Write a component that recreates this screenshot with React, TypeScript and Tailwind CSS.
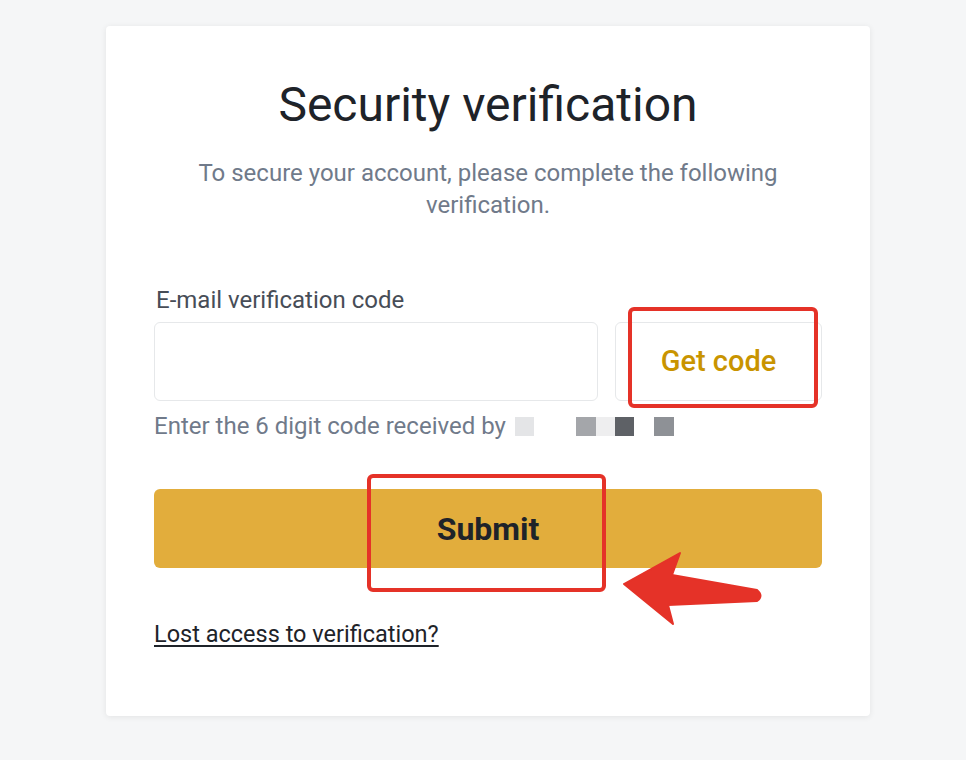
export default function App() {
  return (
    <div className="min-h-screen bg-[#f5f6f7] pt-[26px] font-['Roboto',sans-serif]">
      <div className="relative ml-[106px] h-[690px] w-[764px] rounded-[4px] bg-white px-[48px] pt-[51px] shadow-[0_1px_6px_rgba(0,0,0,0.08)]">
        {/* Heading */}
        <h1 className="text-center text-[48px] leading-[56px] text-[#1e2329]">Security verification</h1>
        <p className="mx-auto mt-[24px] w-[640px] text-center text-[24px] leading-[32px] text-[#707a8a]">
          To secure your account, please complete the following verification.
        </p>

        {/* Code field */}
        <div className="mt-[65px] pl-[2px] text-[24px] leading-[28px] text-[#474d57]">E-mail verification code</div>
        <div className="mt-[8px] flex gap-[17px]">
          <input className="h-[79px] flex-1 rounded-[6px] border border-[#e6e8ea] px-4 outline-none" />
          <div className="flex h-[79px] w-[207px] items-center justify-center rounded-[6px] border border-[#e6e8ea] text-[29px] font-medium text-[#c99400]">
            Get code
          </div>
        </div>
        <div className="mt-[11px] flex items-center text-[24px] leading-[28px] text-[#707a8a]">
          <span>Enter the 6 digit code received by</span>
          <span className="ml-[9px] h-[19px] w-[19px] bg-[#e4e5e7]" />
          <span className="ml-[42px] h-[19px] w-[20px] bg-[#a4a6aa]" />
          <span className="h-[19px] w-[19px] bg-[#eeeeef]" />
          <span className="h-[19px] w-[19px] bg-[#5e6166]" />
          <span className="ml-[20px] h-[19px] w-[20px] bg-[#8e9196]" />
        </div>

        {/* Submit */}
        <button className="mt-[49px] flex h-[79px] w-full items-center justify-center rounded-[6px] bg-[#e2ad3c] text-[32px] font-bold text-[#1e2329]">
          Submit
        </button>

        <a className="mt-[52px] inline-block text-[23.5px] leading-[28px] text-[#1e2329] underline underline-offset-[3px]">
          Lost access to verification?
        </a>

        {/* Annotations */}
        <div className="absolute left-[522px] top-[281px] h-[101px] w-[190px] rounded-[6px] border-[4px] border-[#e53228]" />
        <div className="absolute left-[261px] top-[448px] h-[118px] w-[239px] rounded-[6px] border-[4px] border-[#e53228]" />
        <svg className="absolute left-[500px] top-[520px]" width="170" height="90" viewBox="0 0 170 90">
          <path
            d="M18 38 L74 7 L66 29 L151 44 Q158 50 151 55 L62 59 L67 78 Z"
            fill="#e53228"
            stroke="#e53228"
            strokeWidth="2"
            strokeLinejoin="round"
          />
        </svg>
      </div>
    </div>
  );
}
